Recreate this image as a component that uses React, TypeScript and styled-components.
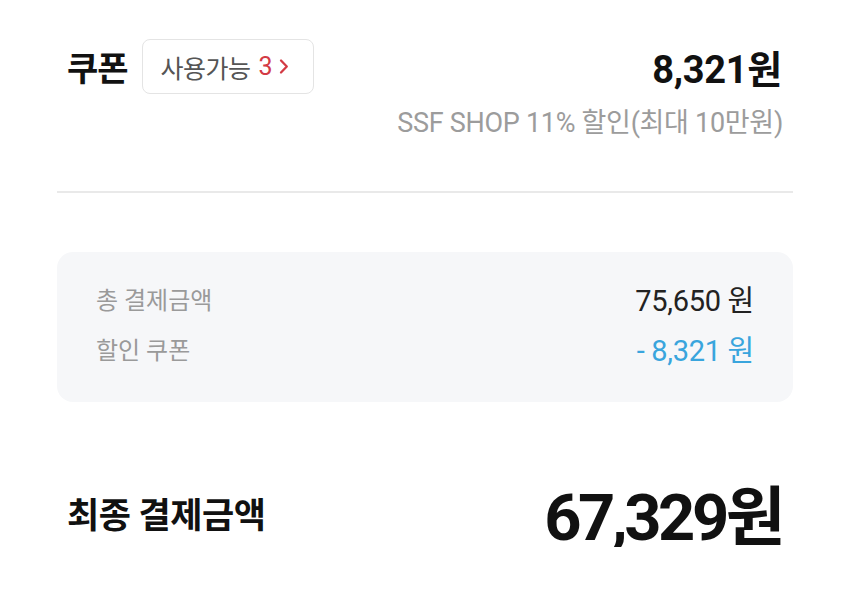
import styled, { createGlobalStyle } from 'styled-components'

const GlobalStyle = createGlobalStyle`
  body {
    margin: 0;
    background: #fff;
    font-family: Roboto, "Noto Sans CJK KR", sans-serif;
  }
`

const summary = [
  { label: '총 결제금액', value: '75,650 원', tone: 'default' },
  { label: '할인 쿠폰', value: '- 8,321 원', tone: 'discount' },
] as const

const App = () => {
  return (
    <Page>
      <GlobalStyle />
      <CouponRow>
        <TitleGroup>
          <Title>쿠폰</Title>
          <Badge>
            사용가능 <Count>3</Count>
            <svg width='10' height='17' viewBox='0 0 10 17' fill='none'>
              <path d='M2 2.5 L7.8 8.5 L2 14.5' stroke='#d33a44' strokeWidth='2.3' strokeLinecap='round' strokeLinejoin='round' />
            </svg>
          </Badge>
        </TitleGroup>
        <Amount>8,321원</Amount>
      </CouponRow>
      <Note>SSF SHOP 11% 할인(최대 10만원)</Note>
      <Divider />
      <SummaryBox>
        {summary.map((row) => (
          <SummaryRow key={row.label}>
            <SummaryLabel>{row.label}</SummaryLabel>
            <SummaryValue $tone={row.tone}>{row.value}</SummaryValue>
          </SummaryRow>
        ))}
      </SummaryBox>
      <TotalRow>
        <TotalLabel>최종 결제금액</TotalLabel>
        <TotalValue>67,329원</TotalValue>
      </TotalRow>
    </Page>
  )
}

export default App

const Page = styled.div`
  width: 736px;
  padding: 39px 57px 0;
`

const CouponRow = styled.div`
  display: flex;
  justify-content: space-between;
  align-items: center;
  height: 55px;
  padding: 0 11px 0 10px;
`

const TitleGroup = styled.div`
  display: flex;
  align-items: center;
  gap: 14px;
`

const Title = styled.h2`
  margin: 0;
  font-size: 34px;
  font-weight: 700;
  color: #111;
  letter-spacing: -1px;
`

const Badge = styled.button`
  display: flex;
  align-items: center;
  gap: 5px;
  height: 55px;
  padding: 0 24px 0 18px;
  border: 1.5px solid #e4e4e4;
  border-radius: 8px;
  background: #fff;
  font-family: Roboto, "Noto Sans CJK KR", sans-serif;
  font-size: 25px;
  color: #555;
  letter-spacing: -0.5px;

  svg {
    margin-left: 2px;
  }
`

const Count = styled.span`
  color: #d33a44;
  margin-left: 3px;
`

const Amount = styled.div`
  font-size: 38px;
  font-weight: 700;
  color: #111;
  letter-spacing: -0.3px;
`

const Note = styled.p`
  margin: 14px 10px 0 0;
  text-align: right;
  font-size: 27px;
  line-height: 30px;
  color: #9c9c9c;
  letter-spacing: -0.3px;
`

const Divider = styled.hr`
  margin: 53px 0 0;
  border: 0;
  height: 2px;
  background: #e9e9e9;
`

const SummaryBox = styled.div`
  margin-top: 59px;
  padding: 21px 39px 29px;
  border-radius: 16px;
  background: #f6f7f9;
`

const SummaryRow = styled.div`
  display: flex;
  justify-content: space-between;
  align-items: center;
  height: 50px;
`

const SummaryLabel = styled.span`
  font-size: 24px;
  color: #9a9a9a;
`

const SummaryValue = styled.span<{ $tone: 'default' | 'discount' }>`
  font-size: 29px;
  letter-spacing: -0.3px;
  color: ${(p) => (p.$tone === 'discount' ? '#39a5dd' : '#222')};
`

const TotalRow = styled.div`
  display: flex;
  justify-content: space-between;
  align-items: center;
  height: 70px;
  margin-top: 75px;
  padding: 0 11px 0 10px;
`

const TotalLabel = styled.span`
  font-size: 35px;
  font-weight: 700;
  color: #111;
  letter-spacing: -0.5px;
`

const TotalValue = styled.span`
  font-size: 65px;
  font-weight: 700;
  color: #111;
  letter-spacing: -3.5px;
`
